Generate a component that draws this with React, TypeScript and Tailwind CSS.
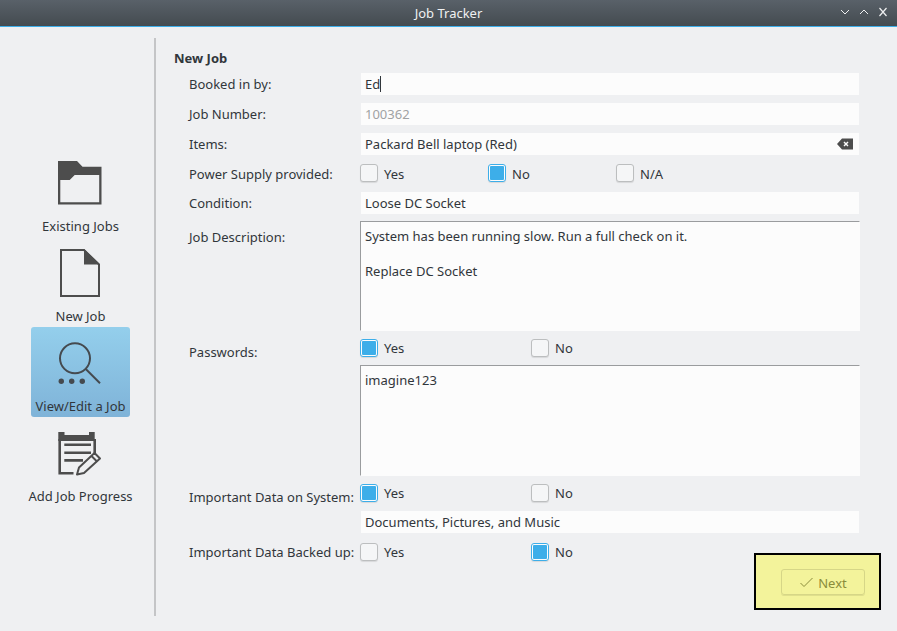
import type { ReactNode } from 'react'

function Check({ label, checked, low, className }: { label: string; checked?: boolean; low?: boolean; className: string }) {
  return (
    <div className={`flex items-center gap-[6px] ${className}`}>
      {checked ? (
        <span className="flex h-[18px] w-[18px] items-center justify-center rounded-[3px] border border-[#3daee9] bg-[#fcfcfc] shadow-[0_1px_1px_rgba(0,0,0,0.1)]">
          <span className="h-[14px] w-[14px] rounded-[1px] bg-[#3daee9]" />
        </span>
      ) : (
        <span className="h-[18px] w-[18px] rounded-[3px] border border-[#bcbebf] bg-[#f5f6f7] shadow-[0_1px_1px_rgba(0,0,0,0.1)]" />
      )}
      <span className={low ? 'pt-[4px]' : 'pt-[2px]'}>{label}</span>
    </div>
  )
}

function Row({ label, className, labelClass, children }: { label: string; className: string; labelClass?: string; children: ReactNode }) {
  return (
    <div className={`flex ${className}`}>
      <div className={`w-[186px] shrink-0 whitespace-nowrap pl-[15px] ${labelClass ?? 'self-center pt-[2px]'}`}>{label}</div>
      {children}
    </div>
  )
}

function Field({ value, muted, children }: { value: string; muted?: boolean; children?: ReactNode }) {
  return (
    <div className="ml-px flex h-[22px] w-[498px] items-center bg-[#fcfcfc] pl-[4px]">
      <span className={`pt-[2px] ${muted ? 'text-[#a0a2a4]' : ''}`}>{value}</span>
      {children}
    </div>
  )
}

function Area({ children, className }: { children: ReactNode; className: string }) {
  return (
    <div className={`w-[500px] border border-t-[#9a9c9e] border-l-[#9a9c9e] border-r-[#fcfcfc] border-b-[#fcfcfc] bg-[#fcfcfc] px-[4px] pt-[5px] leading-[18px] ${className}`}>
      {children}
    </div>
  )
}

function NavItem({ label, active, children }: { label: string; active?: boolean; children: ReactNode }) {
  return (
    <div
      className={`ml-[31px] flex h-[90px] w-[99px] flex-col rounded-[3px] pt-[12px] ${
        active ? 'bg-gradient-to-b from-[#94cfec] to-[#7fb3d8]' : ''
      }`}
    >
      <div className="h-[48px] pl-[25px]">{children}</div>
      <div className="mt-[10px] flex justify-center whitespace-nowrap leading-[18px]">{label}</div>
    </div>
  )
}

export default function App() {
  return (
    <div className="flex h-[631px] w-[897px] flex-col overflow-hidden bg-[#eff0f2] font-['Noto_Sans',sans-serif] text-[13px] text-[#31363b]">
      <div className="relative flex h-[26px] items-center justify-center bg-gradient-to-b from-[#596169] to-[#444b50] pt-[2px] text-[#eff0f1]">
        <span>Job Tracker</span>
        <div className="absolute right-[9px] top-[5px] flex gap-[9px]">
          <svg width="10" height="14" viewBox="0 0 10 14" fill="none" stroke="#eff0f1" strokeWidth="1">
            <path d="M1 5l4 4 4-4" />
          </svg>
          <svg width="10" height="14" viewBox="0 0 10 14" fill="none" stroke="#eff0f1" strokeWidth="1">
            <path d="M1 9l4-4 4 4" />
          </svg>
          <svg width="10" height="14" viewBox="0 0 10 14" fill="none" stroke="#eff0f1" strokeWidth="1.2">
            <path d="M1.500 3l7 8M8.500 3l-7 8" />
          </svg>
        </div>
      </div>
      <div className="h-px bg-[#3daee9]" />

      <div className="relative flex flex-1">
        <div className="flex w-[154px] shrink-0 flex-col pt-[120px]">
          <NavItem label="Existing Jobs">
            <svg width="48" height="48" viewBox="0 0 48 48">
              <path
                fillRule="evenodd"
                fill="#4d4d4d"
                d="M2 2H21L26.500 7.700H45.500V45.500H2ZM4.300 21V43.200H43.200V16H18.700L13.700 21Z"
              />
            </svg>
          </NavItem>
          <NavItem label="New Job">
            <svg width="48" height="48" viewBox="0 0 48 48">
              <path d="M5 1H28L43 15.500V47H5Z" fill="none" stroke="#4d4d4d" strokeWidth="2" />
              <path d="M28 0L44 15.500H28Z" fill="#4d4d4d" />
            </svg>
          </NavItem>
          <NavItem label="View/Edit a Job" active>
            <svg width="48" height="48" viewBox="0 0 48 48" fill="none" stroke="#454a4f" strokeWidth="2">
              <circle cx="19" cy="19.300" r="15" />
              <path d="M30 30.300L44 44.300" />
              <g fill="#454a4f" stroke="none">
                <circle cx="5.300" cy="42.300" r="2.700" />
                <circle cx="15.700" cy="42.300" r="2.700" />
                <circle cx="26.300" cy="42.300" r="2.700" />
              </g>
            </svg>
          </NavItem>
          <NavItem label="Add Job Progress">
            <svg width="48" height="48" viewBox="0 0 48 48" fill="none">
              <path d="M2.300 3H8.500V6H33V3H38.700V12H2.300Z" fill="#4d4d4d" />
              <path d="M3.700 10V44.200H17.500M38.700 10V26" stroke="#4d4d4d" strokeWidth="2.600" />
              <path d="M8.300 15.700H35M8.300 23.700H35M8.300 31.400H27" stroke="#4d4d4d" strokeWidth="2.600" />
              <path d="M21 45.500L23 38.500L38.500 24L44 29.500L28 44Z" stroke="#4d4d4d" strokeWidth="2" strokeLinejoin="round" />
              <path d="M35.500 27L41 32.500" stroke="#4d4d4d" strokeWidth="2" />
            </svg>
          </NavItem>
        </div>

        <div className="mt-[11px] h-[578px] w-[2px] shrink-0 bg-[#c4c5c7]" />

        <div className="flex flex-col pl-[18px]">
          <div className="mt-[22px] h-[19px] font-bold leading-[19px]">New Job</div>
          <Row label="Booked in by:" className="mt-[5px]">
            <Field value="Ed">
              <span className="h-[16px] w-px bg-[#31363b]" />
            </Field>
          </Row>
          <Row label="Job Number:" className="mt-[8px]">
            <Field value="100362" muted />
          </Row>
          <Row label="Items:" className="mt-[8px]">
            <Field value="Packard Bell laptop (Red)">
              <svg className="ml-auto mr-[6px]" width="16" height="12" viewBox="0 0 16 12">
                <path fillRule="evenodd" fill="#4d4d4d" d="M0 6L5 0.500H16V11.500H5ZM7.500 3.500L6.500 4.500L8 6L6.500 7.500L7.500 8.500L9 7L10.500 8.500L11.500 7.500L10 6L11.500 4.500L10.500 3.500L9 5Z" />
              </svg>
            </Field>
          </Row>
          <Row label="Power Supply provided:" className="mt-[9px] h-[18px]" labelClass="self-center pt-[4px]">
            <Check label="Yes" low className="w-[128px]" />
            <Check label="No" low checked className="w-[128px]" />
            <Check label="N/A" low className="w-[128px]" />
          </Row>
          <Row label="Condition:" className="mt-[10px]">
            <Field value="Loose DC Socket" />
          </Row>
          <Row label="Job Description:" className="mt-[7px]" labelClass="pt-[7px]">
            <Area className="h-[110px]">
              <div>System has been running slow. Run a full check on it.</div>
              <div className="mt-[17px]">Replace DC Socket</div>
            </Area>
          </Row>
          <Row label="Passwords:" className="mt-[8px] h-[18px]" labelClass="self-center pt-[10px]">
            <Check label="Yes" checked className="w-[171px]" />
            <Check label="No" className="w-[128px]" />
          </Row>
          <Row label="" className="mt-[8px]">
            <Area className="h-[111px]">imagine123</Area>
          </Row>
          <Row label="Important Data on System:" className="mt-[8px] h-[18px]" labelClass="self-center pt-[10px]">
            <Check label="Yes" checked className="w-[171px]" />
            <Check label="No" className="w-[128px]" />
          </Row>
          <Row label="" className="mt-[9px]">
            <Field value="Documents, Pictures, and Music" />
          </Row>
          <Row label="Important Data Backed up:" className="mt-[10px] h-[18px]">
            <Check label="Yes" className="w-[171px]" />
            <Check label="No" checked className="w-[128px]" />
          </Row>
        </div>

        {/* yellow callout sits over the form's bottom corner */}
        <div className="absolute left-[754px] top-[526px] flex h-[57px] w-[127px] border-2 border-black bg-[#f3f39b] pl-[25px] pt-[14px]">
          <button className="flex h-[26px] w-[84px] items-center justify-center gap-[5px] rounded-[3px] border border-[#d6d687] pl-[1px] pt-[3px] text-[#8a8c3c] shadow-[0_1px_0_#dfdf8c]">
            <svg className="-mt-[3px]" width="13" height="11" viewBox="0 0 13 11" fill="none" stroke="#8a8c3c" strokeWidth="1">
              <path d="M0.500 6L4 9.500L12.500 1" />
            </svg>
            Next
          </button>
        </div>
      </div>
    </div>
  )
}
